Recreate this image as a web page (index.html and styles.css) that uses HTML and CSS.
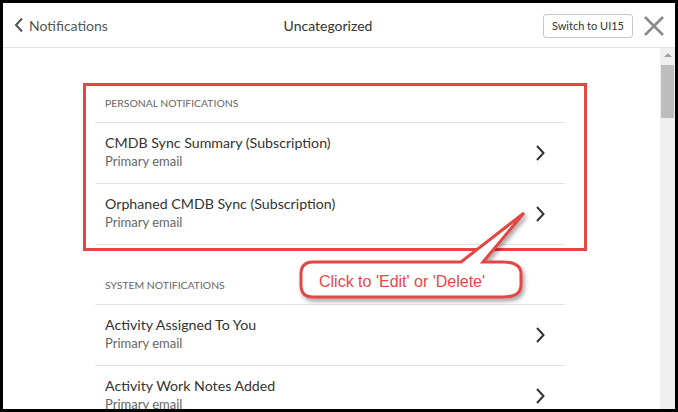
FILE: index.html
```html
<!DOCTYPE html>
<html>
<head>
<meta charset="utf-8">
<link rel="stylesheet" href="styles.css">
</head>
<body>
<div class="frame">
  <header class="topbar">
    <a class="back">
      <svg class="back-icon" width="10" height="16" viewBox="0 0 10 16"><path d="M8 1.5 L2 8 L8 14.5" fill="none" stroke="#555" stroke-width="2"/></svg>
      <span>Notifications</span>
    </a>
    <div class="title">Uncategorized</div>
    <div class="actions">
      <button class="switch">Switch to UI15</button>
      <svg class="close" width="22" height="22" viewBox="0 0 22 22"><path d="M2 2 L20 20 M20 2 L2 20" stroke="#8a8a8a" stroke-width="2.6"/></svg>
    </div>
  </header>
  <div class="body">
    <main class="content">
      <section class="group">
        <h2 class="group-title">PERSONAL NOTIFICATIONS</h2>
        <div class="row">
          <div class="row-text"><div class="row-title">CMDB Sync Summary (Subscription)</div><div class="row-sub">Primary email</div></div>
          <svg class="chev" width="12" height="18" viewBox="0 0 12 18"><path d="M3 2 L9.5 9 L3 16" fill="none" stroke="#333" stroke-width="2"/></svg>
        </div>
        <div class="row">
          <div class="row-text"><div class="row-title">Orphaned CMDB Sync (Subscription)</div><div class="row-sub">Primary email</div></div>
          <svg class="chev" width="12" height="18" viewBox="0 0 12 18"><path d="M3 2 L9.5 9 L3 16" fill="none" stroke="#333" stroke-width="2"/></svg>
        </div>
      </section>
      <section class="group">
        <h2 class="group-title">SYSTEM NOTIFICATIONS</h2>
        <div class="row">
          <div class="row-text"><div class="row-title">Activity Assigned To You</div><div class="row-sub">Primary email</div></div>
          <svg class="chev" width="12" height="18" viewBox="0 0 12 18"><path d="M3 2 L9.5 9 L3 16" fill="none" stroke="#333" stroke-width="2"/></svg>
        </div>
        <div class="row">
          <div class="row-text"><div class="row-title">Activity Work Notes Added</div><div class="row-sub">Primary email</div></div>
          <svg class="chev" width="12" height="18" viewBox="0 0 12 18"><path d="M3 2 L9.5 9 L3 16" fill="none" stroke="#333" stroke-width="2"/></svg>
        </div>
      </section>
    </main>
    <div class="scrollbar">
      <div class="scroll-up"></div>
      <div class="scroll-thumb"></div>
    </div>
  </div>
  <div class="highlight"></div>
  <svg class="callout" width="260" height="110" viewBox="0 0 260 110">
    <defs>
      <filter id="sh" x="-10%" y="-10%" width="130%" height="150%">
        <feDropShadow dx="2" dy="3" stdDeviation="2" flood-color="#000" flood-opacity="0.35"/>
      </filter>
    </defs>
    <path filter="url(#sh)" d="M22 59 L170 59 L233 10 L192 59 L212 59 Q230 59 230 71 L230 82 Q230 94 212 94 L22 94 Q10 94 10 82 L10 71 Q10 59 22 59 Z" fill="#fff" stroke="#e24744" stroke-width="3" stroke-linejoin="miter"/>
  </svg>
  <div class="callout-text">Click to 'Edit' or 'Delete'</div>
</div>
</body>
</html>
```
FILE: styles.css
```css
* { box-sizing: border-box; }
html, body { margin: 0; padding: 0; }
body { width: 678px; height: 412px; overflow: hidden; background: #000; font-family: "Lato", "Noto Sans", sans-serif; }
.frame {
  position: relative;
  width: 678px; height: 412px;
  border: 3px solid #000;
  background: #fff;
  display: flex; flex-direction: column;
  overflow: hidden;
}
.topbar {
  height: 45px; flex: none;
  display: flex; align-items: center;
  border-bottom: 1px solid #e3e3e3;
  padding: 0 10px 0 11px;
  position: relative;
}
.back { display: flex; align-items: center; gap: 5px; color: #555; font-size: 14px; }
.back-icon { display: block; }
.title { position: absolute; left: 0; right: 0; padding-right: 22px; text-align: center; font-size: 14px; color: #333; pointer-events: none; }
.actions { margin-left: auto; display: flex; align-items: center; gap: 10px; position: relative; z-index: 1; }
.switch {
  font-family: "Lato", sans-serif; font-size: 11px; color: #333;
  background: #fff; border: 1px solid #c8c8c8; border-radius: 3px;
  height: 24px; padding: 0 8px; margin-top: 1px;
}
.close { display: block; margin-top: 1px; }
.body { flex: 1; display: flex; min-height: 0; }
.content { flex: 1; padding-top: 40px; display: flex; flex-direction: column; align-items: center; gap: 25px; }
.group { width: 470px; margin-left: -3px; }
.group-title { margin: 0; height: 34px; padding: 8px 10px 0; font-size: 10.4px; line-height: 14px; font-weight: normal; color: #666; }
.row {
  display: flex; align-items: center;
  border-top: 1px solid #e3e3e3;
  padding: 11px 19px 12px 10px;
}
.row:last-child { border-bottom: 1px solid #e3e3e3; }
.row-text { flex: 1; }
.row-title { font-size: 14.2px; line-height: 18px; color: #333; }
.row-sub { font-size: 13px; line-height: 19px; color: #666; }
.chev { display: block; }
.scrollbar { width: 15px; flex: none; background: #f0f0f0; position: relative; }
.scroll-up { width: 0; height: 0; margin: 5px auto 0; border-left: 4px solid transparent; border-right: 4px solid transparent; border-bottom: 4px solid #a3a3a3; }
.scroll-thumb { margin: 8px 1px 0 1px; height: 53px; background: #bdbdbd; }
.highlight {
  position: absolute; left: 80px; top: 80px; width: 504px; height: 168px;
  border: 3px solid #e24744;
}
.callout { position: absolute; left: 288px; top: 200px; }
.callout-text {
  position: absolute; left: 316px; top: 270px;
  font-family: "Liberation Sans", Arial, sans-serif; font-size: 16px; color: #e8474a;
}
```
